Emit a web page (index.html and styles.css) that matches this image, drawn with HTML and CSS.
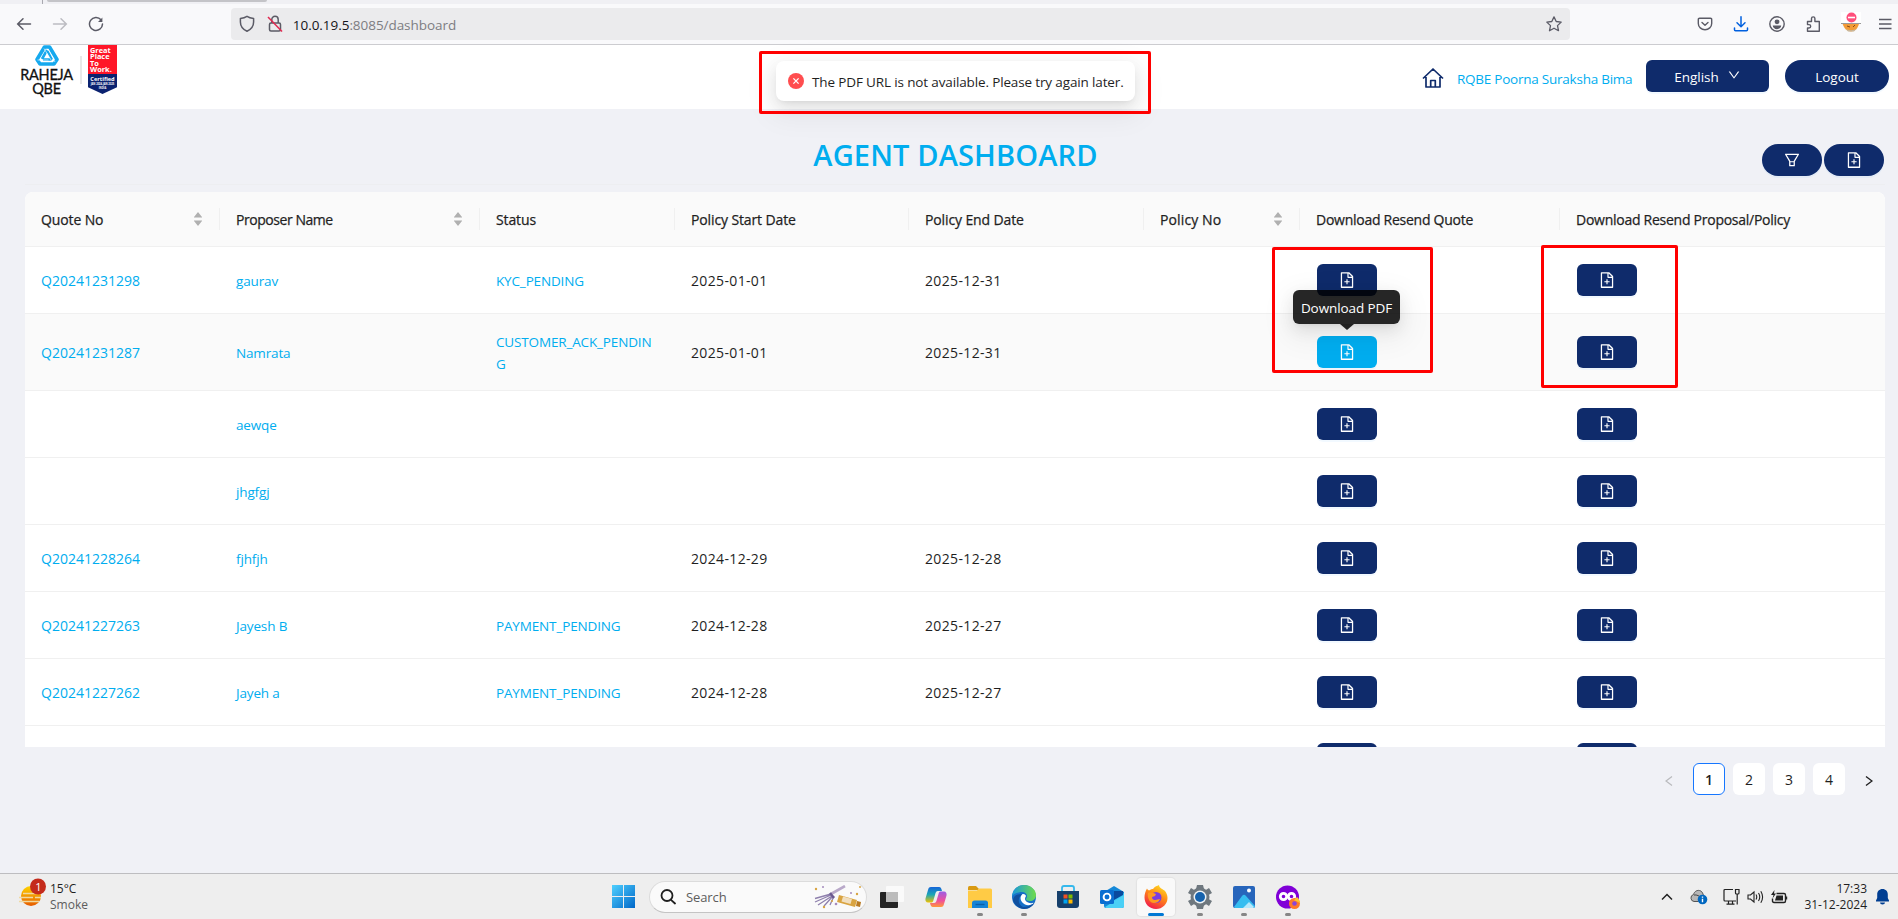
FILE: index.html
```html
<!DOCTYPE html>
<html lang="en">
<head>
<meta charset="utf-8">
<title>Agent Dashboard</title>
<link rel="stylesheet" href="styles.css">
</head>
<body>
<svg class="defs" width="0" height="0" aria-hidden="true">
  <symbol id="file-add" viewBox="0 0 1024 1024"><path fill="currentColor" d="M854.6 288.6L639.4 73.4c-6-6-14.1-9.4-22.6-9.4H192c-17.7 0-32 14.3-32 32v832c0 17.7 14.3 32 32 32h640c17.7 0 32-14.3 32-32V311.3c0-8.5-3.4-16.7-9.4-22.7zM790.2 326H602V137.8L790.2 326zm1.8 562H232V136h302v216a42 42 0 0042 42h216v494zM544 472c0-4.4-3.6-8-8-8h-48c-4.4 0-8 3.6-8 8v108H372c-4.4 0-8 3.6-8 8v48c0 4.4 3.6 8 8 8h108v108c0 4.4 3.6 8 8 8h48c4.4 0 8-3.6 8-8V644h108c4.4 0 8-3.6 8-8v-48c0-4.4-3.6-8-8-8H544V472z"/></symbol>
  <symbol id="sorter" viewBox="0 0 8 14"><path fill="#b0b0b0" d="M4 0L8 5H0zM0 9h8L4 14z"/><path fill="#d4d4d4" d="M0 5h8v1H0zM0 8h8v1H0z"/></symbol>
</svg>

<div class="tabstrip"><span class="tab-sep"></span><span class="tab-active"></span></div>
<div class="navbar">
  <div class="nav-left">
    <svg width="16" height="16" viewBox="0 0 16 16" fill="none" stroke="#5b5b66" stroke-width="1.5" stroke-linecap="round"><path d="M14.500 8H2M7 2.800L1.700 8L7 13.200"/></svg>
    <svg width="16" height="16" viewBox="0 0 16 16" fill="none" stroke="#bcbcc2" stroke-width="1.5" stroke-linecap="round"><path d="M1.500 8H14M9 2.800L14.300 8L9 13.200"/></svg>
    <svg width="16" height="16" viewBox="0 0 16 16" fill="none" stroke="#5b5b66" stroke-width="1.500" stroke-linecap="round"><path d="M13 3.800A6.500 6.500 0 1 0 14.500 8"/><path d="M14.400 1.500V6H10z" fill="#5b5b66" stroke="none"/></svg>
  </div>
  <div class="urlbar">
    <svg width="16" height="18" viewBox="0 0 16 18" fill="none" stroke="#5b5b66" stroke-width="1.500" stroke-linejoin="round"><path d="M8 1.300C10 2.600 12 3.200 14.600 3.600V7C14.600 11 12.500 14.200 8 16.300C3.500 14.200 1.400 11 1.400 7V3.600C4 3.200 6 2.600 8 1.300z"/></svg>
    <svg width="16" height="18" viewBox="0 0 16 18" fill="none" stroke="#5b5b66" stroke-width="1.500"><rect x="2.500" y="8" width="11" height="8" rx="1.500"/><path d="M4.800 8V4.500a3.200 3.200 0 0 1 6.400 0V8"/><path d="M1 2L15 16.500" stroke="#e22850"/></svg>
    <span class="url"><b>10.0.19.5</b>:8085/dashboard</span>
    <svg class="star" width="16" height="16" viewBox="0 0 16 16" fill="none" stroke="#5b5b66" stroke-width="1.300" stroke-linejoin="round"><path d="M8 .9L10.200 5.500L15.200 6.100L11.500 9.600L12.500 14.700L8 12.200L3.500 14.700L4.500 9.600L.8 6.100L5.800 5.500z"/></svg>
  </div>
  <div class="nav-right">
    <svg width="16" height="16" viewBox="0 0 16 16" fill="none" stroke="#5b5b66" stroke-width="1.400" stroke-linecap="round" stroke-linejoin="round"><path d="M2.500 2.200h11a1.200 1.200 0 0 1 1.200 1.200V7.500a6.700 6.200 0 0 1-13.400 0V3.400a1.200 1.200 0 0 1 1.200-1.200zM5 6.500L8 9.300L11 6.500"/></svg>
    <svg width="16" height="16" viewBox="0 0 16 16" fill="none" stroke="#0060df" stroke-width="1.500" stroke-linecap="round" stroke-linejoin="round"><path d="M8 .8V10.500M4 6.800L8 10.700L12 6.800M1.500 12v1.800a1 1 0 0 0 1 1h11a1 1 0 0 0 1-1V12"/></svg>
    <svg width="16" height="16" viewBox="0 0 16 16"><circle cx="8" cy="8" r="7.200" fill="none" stroke="#5b5b66" stroke-width="1.400"/><circle cx="8" cy="5.800" r="2.400" fill="#5b5b66"/><path d="M3.800 9.500h8.400c0 2-1.800 3.700-4.200 3.700s-4.200-1.700-4.200-3.700z" fill="#5b5b66"/></svg>
    <svg width="16" height="16" viewBox="0 0 16 16" fill="none" stroke="#5b5b66" stroke-width="1.400" stroke-linejoin="round"><path d="M2.500 5.500H6.500V2.600a1.700 1.700 0 0 1 3.400 0V5.500H14.300V15.200H2.500V12H4a1.700 1.700 0 0 0 0-3.400H2.500z"/></svg>
    <svg class="fox" width="20" height="22" viewBox="0 0 20 22"><rect width="20" height="12" fill="#fff"/><path d="M1.500 11.500H18c-1 5-4 8-8 8s-7-3-8.500-8z" fill="#f29b38"/><path d="M4 16c3 3 9 3 12 0l-3 3.500H7z" fill="#c7b79d"/><path d="M0 11.500h20" stroke="#9a9a9a"/><path d="M6 14l3 1M14 13l-2 2" stroke="#8a4b16"/><circle cx="10.500" cy="5.500" r="5" fill="#ff4f7b"/><path d="M7 5.500h7" stroke="#fff" stroke-width="1.600"/></svg>
    <svg class="menu" width="13" height="12" viewBox="0 0 13 12" stroke="#5b5b66" stroke-width="1.300"><path d="M0 1.500h12.500M0 6h12.500M0 10.500h12.500"/></svg>
  </div>
</div>

<header class="site-header">
  <div class="logos">
    <div class="raheja">
      <svg width="24" height="21" viewBox="0 0 24 21" fill="none" stroke="#16a9ee" stroke-width="3.600" stroke-linejoin="round"><path d="M9.500 2h5L22 14.500L19 19H5L2 14.500z"/><path d="M12 5L7 14M12.500 6l4.500 8.500M8 14.500h9" stroke-width="2.600"/><path d="M9 3.500l8 13M2.500 15h11M20 17L13 4" stroke="#fff" stroke-width=".6"/></svg>
      <span class="brand">RAHEJA<br>QBE</span>
    </div>
    <div class="logo-sep"></div>
    <div class="gptw">
      <div class="gptw-top">Great<br>Place<br>To<br>Work.</div>
      <div class="gptw-bottom"><span class="cert">Certified</span><span class="cert-date">JAN 2024-JAN 2025</span><span class="cert-date">INDIA</span></div>
    </div>
  </div>
  <div class="header-actions">
    <svg class="home" width="22" height="22" viewBox="0 0 22 22" fill="none" stroke="#0f2b6b" stroke-width="1.700" stroke-linejoin="round"><path d="M1 11.500L11 2L21 11.500M4 10V20H18V10M8.700 20V13.500H13.300V20"/></svg>
    <a class="product">RQBE Poorna Suraksha Bima</a>
    <button class="btn lang">English <svg width="14" height="14" viewBox="0 0 1024 1024"><path fill="#fff" d="M884 256h-75c-5.100 0-9.900 2.500-12.900 6.600L512 654.200 227.900 262.600c-3-4.100-7.800-6.600-12.900-6.600h-75c-6.500 0-10.300 7.400-6.500 12.700l352.600 486.100c12.800 17.600 39 17.600 51.700 0l352.600-486.100c3.900-5.300.1-12.700-6.400-12.700z"/></svg></button>
    <button class="btn logout">Logout</button>
  </div>
</header>

<main class="content">
  <div class="title-row">
    <h1>AGENT DASHBOARD</h1>
    <div class="tools">
      <button class="btn pill"><svg width="18" height="18" viewBox="0 0 1024 1024"><path fill="#fff" d="M880.100 154H143.900c-24.500 0-39.800 26.700-27.500 48L349 597.400V838c0 17.700 14.200 32 31.800 32h262.400c17.600 0 31.800-14.300 31.800-32V597.400L907.700 202c12.200-21.300-3.100-48-27.600-48zM603.400 798H420.600V642h182.900v156zm9.600-236.600l-9.500 16.600h-183l-9.500-16.600L212.700 226h598.600L613 561.400z"/></svg></button>
      <button class="btn pill"><svg width="18" height="18"><use href="#file-add"/></svg></button>
    </div>
  </div>
  <div class="table">
    <div class="row head">
      <div>Quote No<svg class="sort" width="8" height="14"><use href="#sorter"/></svg></div>
      <div class="snug">Proposer Name<svg class="sort" width="8" height="14"><use href="#sorter"/></svg></div>
      <div>Status</div><div>Policy Start Date</div><div>Policy End Date</div>
      <div class="airy">Policy No<svg class="sort" width="8" height="14"><use href="#sorter"/></svg></div>
      <div class="tight">Download Resend Quote</div><div class="tight">Download Resend Proposal/Policy</div>
    </div>
    <div class="row"><a class="num">Q20241231298</a><a>gaurav</a><a>KYC_PENDING</a><span>2025-01-01</span><span>2025-12-31</span><span></span><div><button class="btn dl"><svg width="18" height="18"><use href="#file-add"/></svg></button></div><div><button class="btn dl"><svg width="18" height="18"><use href="#file-add"/></svg></button></div></div>
    <div class="row hovered"><a class="num">Q20241231287</a><a>Namrata</a><a>CUSTOMER_ACK_PENDIN<br>G</a><span>2025-01-01</span><span>2025-12-31</span><span></span><div class="tip-anchor"><button class="btn dl active"><svg width="18" height="18"><use href="#file-add"/></svg></button><div class="tooltip">Download PDF</div></div><div><button class="btn dl"><svg width="18" height="18"><use href="#file-add"/></svg></button></div></div>
    <div class="row"><a></a><a>aewqe</a><a></a><span></span><span></span><span></span><div><button class="btn dl"><svg width="18" height="18"><use href="#file-add"/></svg></button></div><div><button class="btn dl"><svg width="18" height="18"><use href="#file-add"/></svg></button></div></div>
    <div class="row"><a></a><a>jhgfgj</a><a></a><span></span><span></span><span></span><div><button class="btn dl"><svg width="18" height="18"><use href="#file-add"/></svg></button></div><div><button class="btn dl"><svg width="18" height="18"><use href="#file-add"/></svg></button></div></div>
    <div class="row"><a class="num">Q20241228264</a><a>fjhfjh</a><a></a><span>2024-12-29</span><span>2025-12-28</span><span></span><div><button class="btn dl"><svg width="18" height="18"><use href="#file-add"/></svg></button></div><div><button class="btn dl"><svg width="18" height="18"><use href="#file-add"/></svg></button></div></div>
    <div class="row"><a class="num">Q20241227263</a><a>Jayesh B</a><a>PAYMENT_PENDING</a><span>2024-12-28</span><span>2025-12-27</span><span></span><div><button class="btn dl"><svg width="18" height="18"><use href="#file-add"/></svg></button></div><div><button class="btn dl"><svg width="18" height="18"><use href="#file-add"/></svg></button></div></div>
    <div class="row"><a class="num">Q20241227262</a><a>Jayeh a</a><a>PAYMENT_PENDING</a><span>2024-12-28</span><span>2025-12-27</span><span></span><div><button class="btn dl"><svg width="18" height="18"><use href="#file-add"/></svg></button></div><div><button class="btn dl"><svg width="18" height="18"><use href="#file-add"/></svg></button></div></div>
    <div class="row"><a></a><a></a><a></a><span></span><span></span><span></span><div><button class="btn dl"></button></div><div><button class="btn dl"></button></div></div>
  </div>
  <nav class="pages">
    <span class="arrow off"><svg width="8" height="12" viewBox="0 0 8 12" fill="none" stroke="currentColor" stroke-width="1.200"><path d="M7 1.500L1 6L7 10.500"/></svg></span>
    <span class="page current">1</span><span class="page">2</span><span class="page">3</span><span class="page">4</span>
    <span class="arrow"><svg width="8" height="12" viewBox="0 0 8 12" fill="none" stroke="currentColor" stroke-width="1.400"><path d="M1 1.500L7 6L1 10.500"/></svg></span>
  </nav>
</main>

<footer class="taskbar">
  <div class="weather">
    <svg width="28" height="28" viewBox="0 0 28 28"><defs><linearGradient id="sun" x2="0" y2="1"><stop stop-color="#ffd400"/><stop offset="1" stop-color="#e65a00"/></linearGradient></defs><circle cx="12" cy="18" r="10" fill="url(#sun)"/><path d="M4 15.500h15M0 19.500h14M16 19.500h6M0 23.500h20" stroke="#f0d9a2" stroke-width="1.700"/><circle cx="19" cy="8.500" r="8" fill="#c42b1c"/><text x="19.500" y="12.500" text-anchor="middle" class="badge">1</text></svg>
    <div class="weather-text"><span>15°C</span><span class="dim">Smoke</span></div>
  </div>
  <div class="apps">
    <svg width="23" height="23" viewBox="0 0 23 23"><defs><linearGradient id="win" x2="1" y2="1"><stop stop-color="#4fd0ff"/><stop offset="1" stop-color="#0067c8"/></linearGradient></defs><path fill="url(#win)" d="M0 0h11v11H0zM12 0h11v11H12zM0 12h11v11H0zM12 12h11v11H12z"/></svg>
    <div class="search">
      <svg width="16" height="16" viewBox="0 0 16 16" fill="none" stroke="#1f1f1f" stroke-width="1.800" stroke-linecap="round"><circle cx="7" cy="6.500" r="5.500"/><path d="M11 10.800L15 14.500"/></svg>
      <span>Search</span>
      <svg class="doodle" width="48" height="24" viewBox="0 0 48 24"><path d="M17 9L31 1" stroke="#b9a9c9" stroke-width="2.600"/><path d="M1 13.500L17 9M1 17L17 10M4 20L18 11M10 21L19 11M16 20L20 11" stroke="#8f80ad" stroke-width="1.300"/><path d="M16 8l4 5" stroke="#6c5a90" stroke-width="2.400"/><path d="M25 10l18 5-2 7-18-5z" fill="#d9a441"/><path d="M29 11.500l9 2.500-1.500 5-9-2.500z" fill="#f1dfc0"/><path d="M43 16l4 1-1 5-4-1z" fill="#b97b24"/><g fill="#d9a441"><circle cx="2" cy="4" r="1.200"/><circle cx="46" cy="2" r="1"/><circle cx="10" cy="22" r="1.200"/><circle cx="43" cy="9" r="1.200"/><circle cx="18" cy="16" r="1"/></g><g fill="#a58bbd"><circle cx="9" cy="2" r="1"/><circle cx="37" cy="8" r="1"/><circle cx="22" cy="19" r="1.300"/></g></svg>
    </div>
    <svg class="app-view" width="24" height="22" viewBox="0 0 24 22"><rect y="6" width="18" height="16" rx="1" fill="#242424"/><rect x="6" width="18" height="16" rx="1" fill="#fafafa"/><rect x="6" y="6" width="12" height="10" fill="#bcbcbc"/></svg>
    <svg class="app-copilot" width="22" height="22" viewBox="0 0 22 22"><defs><linearGradient id="cpa" x2="0" y2="1"><stop stop-color="#1565d8"/><stop offset=".5" stop-color="#1ba7b5"/><stop offset="1" stop-color="#f2c200"/></linearGradient><linearGradient id="cpb" x2="0" y2="1"><stop stop-color="#9b5de5"/><stop offset=".6" stop-color="#f0509a"/><stop offset="1" stop-color="#ff9838"/></linearGradient></defs><path fill="url(#cpa)" d="M6 1h8c2 0 2.500 2 3 4h-4c-2 0-2.500 2-3 4l-1.500 5c-.5 2-1 2.500-3 2.500H3c-2 0-3-2-2.500-4L3 4c.5-2 1-3 3-3z"/><path fill="url(#cpb)" d="M16 5.500h3c2 0 3 2 2.500 4L19 18c-.5 2-1 3-3 3H8c-2 0-2.500-2-3-4h4c2 0 2.500-2 3-4l1.500-5c.5-2 1-2.500 2.500-2.500z"/></svg>
    <div class="app run"><svg width="24" height="22" viewBox="0 0 24 22"><path d="M0 1.500Q0 0 1.500 0H8l2.500 2.500V4H0z" fill="#d99a12"/><path d="M0 4.500h9l2-2H22.500Q24 2.500 24 4V22H0z" fill="#ffcb45"/><path d="M4 22V17q0-2.500 2.500-2.500h11Q20 14.500 20 17v5z" fill="#1583d6"/><path d="M7.500 18.500h9" stroke="#0b5fa8" stroke-width="1.400"/></svg></div>
    <div class="app run"><svg width="24" height="24" viewBox="0 0 24 24"><defs><linearGradient id="eda"><stop stop-color="#1798dc"/><stop offset="1" stop-color="#6fdc4b"/></linearGradient></defs><circle cx="12" cy="12" r="12" fill="#1670c9"/><path d="M0 11C1 4 6 0 12 0c7 0 12 5 12 10 0 4-3 6-6 6-3 0-4-1-4-2s1-1 1-3c0-2-2-4-5-4-5 0-9 3-10 4z" fill="url(#eda)"/><path d="M10 9.500c-3 3-1 8 3 10 3 1.500 7 .5 9.500-2-1 .8-7 1.500-9-2-.8-1.500-.5-3 .5-4.500-.5-1.500-2.500-2.500-4-1.500z" fill="#fff"/><path d="M11 22c-5-2-6-9-1-12.500-6-1-9 2-9 6C3 21 8 24 12 24c5 0 9-3 10.500-6.500-3 3-8 4.500-11.500 4.500z" fill="#0f4f9e"/></svg></div>
    <div class="app"><svg width="24" height="24" viewBox="0 0 24 24"><path d="M6 6V3q0-2 2-2h8q2 0 2 2V6" fill="none" stroke="#35b8ec" stroke-width="1.800"/><path d="M1 6h22v14q0 3-3 3H4q-3 0-3-3z" fill="#163f6b"/><path fill="#f25022" d="M7.500 9.500h4v4h-4z"/><path fill="#7fba00" d="M12.500 9.500h4v4h-4z"/><path fill="#00a4ef" d="M7.500 14.500h4v4h-4z"/><path fill="#ffb900" d="M12.500 14.500h4v4h-4z"/></svg></div>
    <div class="app"><svg width="24" height="22" viewBox="0 0 24 22"><path d="M4 6L14 0l10 6v14q0 2-2 2H6q-2 0-2-2z" fill="#1488d8"/><path d="M24 7L12 15l12 6z" fill="#39c6f4"/><path d="M5 21L24 9v11q0 2-2 2H6z" fill="#4ad0f6"/><path d="M14 5h9v4l-9 5z" fill="#0a4a9e"/><rect y="4" width="14" height="14" rx="1.500" fill="#0a6ed1"/><circle cx="7" cy="11" r="3.400" fill="none" stroke="#fff" stroke-width="1.900"/></svg></div>
    <div class="app focus"><svg width="24" height="24" viewBox="0 0 24 24"><defs><linearGradient id="ff" x1=".8" y1="0" x2=".3" y2="1"><stop stop-color="#ffe226"/><stop offset=".45" stop-color="#ff8a16"/><stop offset="1" stop-color="#f0184e"/></linearGradient></defs><path fill="url(#ff)" d="M3 3.500c.5 1 1 1.500 2 2C7 4 8 4 9 4c2-3 4-3 6-4 0 3 4 4 6 6 1.500 2 2.500 4 2.500 7C23.500 19 18.500 24 12 24S.5 19 .5 12.500C.5 9 1.500 6 3 3.500z"/><circle cx="12" cy="12.500" r="5.500" fill="#7a3ee0"/><path d="M4 8c2-1 6 0 8 1l-1 2-3 1c0 2 1 3 3 3s3-1 5-1c-1 3-4 4-6 4-4 0-7-5-6-10z" fill="#ff9a20"/></svg></div>
    <div class="app run"><svg width="24" height="24" viewBox="0 0 24 24"><g fill="#6f787f"><path d="M9 0h6l1 4H8zM9 24h6l1-4H8zM0 8l3-5 4 2.500L3.500 10zM24 8l-3-5-4 2.500 3.500 4.500zM0 16l3 5 4-2.500L3.500 14zM24 16l-3 5-4-2.500 3.500-4.500z"/><circle cx="12" cy="12" r="9.500"/></g><circle cx="12" cy="12" r="6.500" fill="#eef3f6"/><circle cx="12" cy="12" r="5" fill="#1763ad"/></svg></div>
    <div class="app run"><svg width="22" height="22" viewBox="0 0 22 22"><rect width="22" height="22" rx="2" fill="#2765bb"/><path d="M1 21L9 10q2-2.500 4 0l9 10q0 2-2 2H2z" fill="#35bdf0"/><path d="M10 22l6-6 5 5-1 1z" fill="#b6e8fb"/><circle cx="16" cy="4.500" r="2" fill="#fff"/></svg></div>
    <div class="app run"><svg width="24" height="24" viewBox="0 0 24 24"><circle cx="11.500" cy="12" r="11.500" fill="#8000d7"/><g fill="none" stroke="#fff" stroke-width="2.800"><circle cx="7.500" cy="11.500" r="3.200"/><circle cx="15.500" cy="11.500" r="3.200"/></g><circle cx="18.500" cy="18.500" r="5.500" fill="#ff7a28"/><path d="M15 14l3 1 3-3c2 2 3 4 3 6l-4-2z" fill="#ffc42e"/><circle cx="18.500" cy="18.500" r="2.300" fill="#8a46d8"/></svg></div>
  </div>
  <div class="tray">
    <svg width="12" height="8" viewBox="0 0 12 8" fill="none" stroke="#222" stroke-width="1.500"><path d="M1 6.500L6 1.500L11 6.500"/></svg>
    <svg class="cloud" width="18" height="16" viewBox="0 0 18 16"><path d="M4 12.500a3.600 3.600 0 0 1-.5-7C4.500 2 7.500 1 9.500 1.500c2 .4 3 2 3.500 3.500l1 3-6 4.500z" fill="#b6b6b6" stroke="#555"/><path d="M4 6c3-.5 5 1 8 3" stroke="#444" fill="none"/><circle cx="12.500" cy="10.500" r="4.800" fill="#0067c0"/><path d="M12.500 9.700v3.500M12.500 7.600v1.200" stroke="#fff" stroke-width="1.400"/></svg>
    <svg class="net" width="17" height="17" viewBox="0 0 17 17" fill="none" stroke="#222" stroke-width="1.200"><path d="M10 1.500H2q-1 0-1 1V12q0 1 1 1H13M5.500 13v3M9.500 13v3M3.500 16.200h8M12.500 1.500h3.500V5q0 1-1 1h-1.500q-1 0-1-1zM14.200 6v10.500"/></svg>
    <svg class="vol" width="17" height="14" viewBox="0 0 17 14" fill="none" stroke="#222" stroke-width="1.100"><path d="M1 5h2.500L7 2v10L3.500 9H1zM9 4.500q1.500 2.500 0 5M11.500 3q2.500 4 0 8M13.800 1.200q3.600 5.800 0 11.600"/></svg>
    <svg class="bat" width="17" height="14" viewBox="0 0 17 14"><path d="M5.500 3.500H13q1.500 0 1.500 1.500v6q0 1.500-1.500 1.500H3q-1.500 0-1.500-1.500V8.500M15.500 6.500v3" fill="none" stroke="#222" stroke-width="1.400"/><path d="M5.500 5.500H12v5H4z" fill="#222"/><path d="M3.500 0L0 5h2.500L1.500 8.500L5 3.500H3z" fill="#222"/></svg>
    <div class="clock"><span>17:33</span><span>31-12-2024</span></div>
    <svg width="13" height="16" viewBox="0 0 13 16"><path d="M6.500 0C3.300 0 1.200 2.300 1.200 5.500V9L0 11.500V12.500H13V11.500L11.800 9V5.500C11.800 2.300 9.700 0 6.500 0zM4 13.500a2.500 2 0 0 0 5 0z" fill="#003e92"/></svg>
  </div>
</footer>

<div class="toast"><svg width="16" height="16" viewBox="0 0 16 16"><circle cx="8" cy="8" r="8" fill="#ff4d4f"/><path d="M5.400 5.400l5.200 5.200M10.600 5.400L5.400 10.600" stroke="#fff" stroke-width="1.300"/></svg><span>The PDF URL is not available. Please try again later.</span></div>
<div class="mark mark-toast"></div>
<div class="mark mark-quote"></div>
<div class="mark mark-policy"></div>
</body>
</html>
```
FILE: styles.css
```css
* { box-sizing: border-box; }
body {
  margin: 0; width: 1898px; height: 919px; overflow: hidden; position: relative;
  display: flex; flex-direction: column; background: #f0f1f6;
  font: 13.5px/22px "Open Sans", "Noto Sans", sans-serif; color: #1f1f1f;
}
svg { display: block; flex: none; }
.defs { position: absolute; }
button { font: inherit; border: 0; padding: 0; margin: 0; }

.tabstrip { height: 4px; background: #f0f0f4; display: flex; flex: none; }
.tab-sep { width: 1px; margin-left: 42px; background: #a9a9b0; }
.tab-active { width: 220px; height: 2px; margin-left: 4px; background: #c4c4c8; border-radius: 0 0 4px 4px; }
.navbar { height: 41px; flex: none; background: #f9f9fb; border-bottom: 1px solid #ccccd0; display: flex; align-items: center; padding: 0 6px 0 16px; }
.nav-left { display: flex; gap: 20px; width: 215px; }
.urlbar { width: 1340px; height: 32px; background: #ebebed; border-radius: 4px; display: flex; align-items: center; padding: 0 8px; gap: 12px; }
.url { color: #7d7d82; margin-left: -2px; padding-top: 2px; letter-spacing: -.05px; }
.url b { font-weight: 400; color: #15141a; }
.star { margin-left: auto; }
.nav-right { display: flex; align-items: center; gap: 20px; padding-left: 127px; }
.fox { margin-top: -3px; }
.menu { margin-left: -2px; }

.site-header { height: 64px; flex: none; background: #fff; display: flex; justify-content: space-between; padding: 0 9px 0 20px; }
.logos { display: flex; }
.raheja { width: 53px; display: flex; flex-direction: column; align-items: center; font-family: Lato, sans-serif; color: #111; }
.brand { font-size: 14.500px; line-height: 14px; letter-spacing: -.25px; text-align: center; margin-top: 2px; white-space: nowrap; -webkit-text-stroke: .3px #111; }
.logo-sep { width: 2px; height: 28px; margin: 11px 6px 0 7px; background: #e8e8e8; }
.gptw { width: 29px; height: 49px; color: #fff; font-weight: 700; clip-path: polygon(0 0, 100% 0, 100% 86%, 50% 100%, 0 86%); }
.gptw-top { height: 29px; background: #ff1628; font-size: 7.400px; line-height: 6.400px; padding: 2px 0 0 2px; }
.gptw-bottom { height: 20px; background: #0b2270; display: flex; flex-direction: column; align-items: center; padding-top: 2px; }
.cert { font-size: 5.600px; line-height: 6px; }
.cert-date { font-size: 2.600px; line-height: 4px; }
.header-actions { display: flex; align-items: flex-start; padding-top: 15px; }
.home { margin-top: 7px; }
.product { color: #00adef; margin: 8px 14px 0 13px; width: 175px; white-space: nowrap; letter-spacing: -.24px; }
.btn { background: #0f2b6b; color: #fff; border-radius: 6px; height: 32px; display: flex; align-items: center; justify-content: center; box-shadow: 0 2px 0 rgba(5, 145, 255, .05); }
.lang { width: 123px; gap: 8px; margin-right: 16px; padding-top: 2px; }
.lang svg { margin-top: -4px; }
.logout { width: 104px; border-radius: 16px; padding-top: 2px; }

.content { flex: 1; padding: 0 13px 0 25px; display: flex; flex-direction: column; }
.title-row { height: 76px; border-bottom: 1px solid #edeef1; display: grid; grid-template-columns: 1fr auto 1fr; align-items: center; margin-bottom: 7px; }
h1 { grid-column: 2; margin: 0 0 0 1px; padding-top: 17px; font-size: 29px; line-height: 38px; font-weight: 600; color: #00adef; white-space: nowrap; letter-spacing: .15px; }
.tools { grid-column: 3; justify-self: end; display: flex; gap: 2px; padding: 26px 1px 0 0; }
.pill { width: 60px; border-radius: 16px; }
.table { height: 555px; overflow: hidden; background: #fff; border-radius: 8px 8px 0 0; }
.row { display: grid; grid-template-columns: 195px 260px 195px 234px 235px 156px 260px 325px; align-items: center; height: 67px; border-bottom: 1px solid #f0f0f0; }
.row > * { padding: 0 16px; }
.row a { color: #00adef; letter-spacing: -.15px; }
.row .num { font-size: 14px; letter-spacing: 0; }
.row span { font-size: 14px; letter-spacing: .35px; }
.row a, .row span { padding-top: 2px; }
.head { height: 55px; background: #fafafa; font-size: 14px; letter-spacing: -.12px; -webkit-text-stroke: .25px #1f1f1f; }
.head > div { height: 22px; display: flex; justify-content: space-between; align-items: center; border-right: 1px solid #f0f0f0; white-space: nowrap; padding-top: 1px; }
.head > div:last-child { border: 0; }
.snug { letter-spacing: -.45px; }
.airy { letter-spacing: .12px; }
.tight { letter-spacing: -.26px; }
.sort { margin: -1px 1px 0 0; -webkit-text-stroke: 0; }
.hovered { height: 77px; background: #fafafa; }
.dl { width: 60px; margin-left: 1px; }
.active { background: #00adef; }
.tip-anchor { position: relative; }
.tooltip {
  position: absolute; left: -7px; top: -46px; width: 107px; height: 34px; border-radius: 6px;
  background: rgba(0, 0, 0, .85); color: #fff; text-align: center; line-height: 36px; white-space: nowrap; letter-spacing: -.1px;
  box-shadow: 0 6px 16px rgba(0, 0, 0, .08), 0 3px 6px -4px rgba(0, 0, 0, .12), 0 9px 28px 8px rgba(0, 0, 0, .05);
}
.tooltip::after { content: ""; position: absolute; left: 47px; top: 34px; border: 7px solid transparent; border-top: 6px solid rgba(0, 0, 0, .85); border-bottom: 0; }
.pages { display: flex; justify-content: flex-end; gap: 8px; margin-top: 16px; font-size: 14px; }
.page, .arrow { width: 32px; height: 32px; border-radius: 6px; display: flex; align-items: center; justify-content: center; }
.page { background: #fff; padding-top: 2px; }
.current { border: 1px solid #1677ff; padding-top: 1px; font-weight: 600; }
.arrow { padding-top: 4px; }
.off { color: #b9babd; }

.taskbar { height: 46px; flex: none; background: #eee; border-top: 1px solid #bdbdc0; display: grid; grid-template-columns: 612px auto 1fr; }
.weather { display: flex; padding: 4px 0 0 19px; gap: 3px; }
.badge { font-size: 11px; fill: #fff; }
.weather-text { display: flex; flex-direction: column; font-size: 12px; line-height: 16px; padding-top: 3px; }
.dim { color: #5d5d5d; }
.apps { display: flex; align-items: center; }
.search { width: 218px; height: 32px; margin: 0 13px 0 14px; border-radius: 16px; background: #fafafa; border: 1px solid #dcdcdc; border-bottom-color: #c4c4c4; display: flex; align-items: center; padding: 0 4px 0 10px; gap: 10px; color: #5d5d5d; font-size: 13px; letter-spacing: -.1px; }
.doodle { margin-left: auto; }
.app-view { margin-right: 21px; }
.app-copilot { margin-right: 14px; }
.app { width: 38px; height: 38px; margin-right: 6px; border-radius: 4px; display: flex; align-items: center; justify-content: center; position: relative; }
.focus { background: #f9f9f9; box-shadow: 0 0 1px 1px #e2e2e2; }
.run::after, .focus::after { content: ""; position: absolute; bottom: 0; width: 6px; height: 3px; border-radius: 2px; background: #868686; }
.focus::after { width: 16px; background: #0078d4; }
.tray { display: flex; align-items: center; justify-content: flex-end; padding-right: 9px; }
.cloud { margin-left: 17px; }
.net { margin-left: 15px; }
.vol { margin-left: 7px; }
.bat { margin-left: 7px; }
.clock { width: 79px; display: flex; flex-direction: column; align-items: flex-end; font-size: 12px; line-height: 16px; margin-right: 9px; white-space: nowrap; }

.toast {
  position: absolute; left: 776px; top: 61px; width: 359px; height: 40px; padding: 0 12px; border-radius: 8px; background: #fff;
  display: flex; align-items: center; gap: 8px; white-space: nowrap; letter-spacing: -.14px;
  box-shadow: 0 6px 16px rgba(0, 0, 0, .08), 0 3px 6px -4px rgba(0, 0, 0, .12), 0 9px 28px 8px rgba(0, 0, 0, .05);
}
.toast span { padding-top: 2px; }
.mark { position: absolute; border: 3px solid #f00; border-radius: 2px; }
.mark-toast { left: 759px; top: 51px; width: 392px; height: 63px; }
.mark-quote { left: 1272px; top: 247px; width: 161px; height: 126px; }
.mark-policy { left: 1541px; top: 245px; width: 137px; height: 143px; }
```
